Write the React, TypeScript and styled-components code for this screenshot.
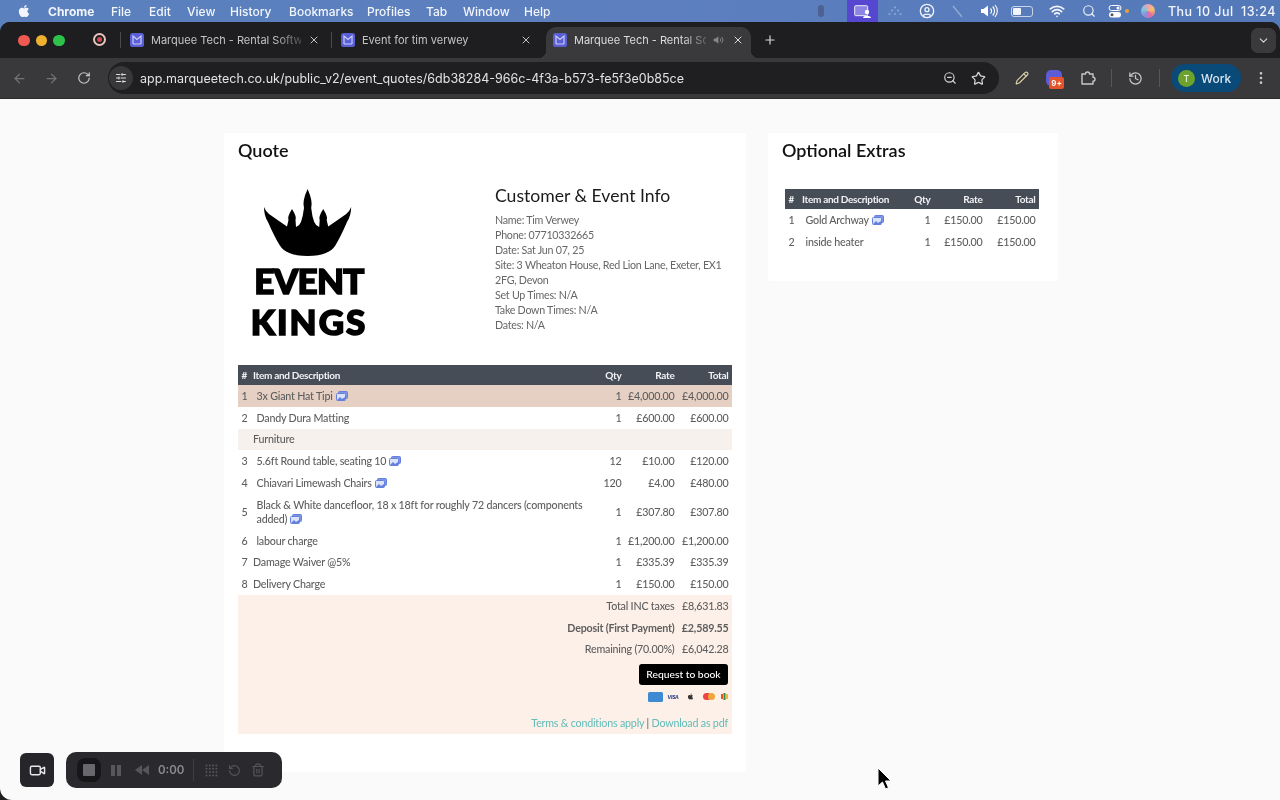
import React from "react";
import styled, { createGlobalStyle } from "styled-components";
import {
  ArrowLeft, ArrowRight, RotateCw, SlidersHorizontal, ZoomOut, Star, Pencil, History,
  EllipsisVertical, Plus, X, ChevronDown, Video, Search, Wifi, UserCircle, RotateCcw, Trash2,
} from "lucide-react";
import { FaApple } from "react-icons/fa";

const Global = createGlobalStyle`
  html, body { margin: 0; padding: 0; width: 1280px; height: 800px; overflow: hidden; background: #fafafa; }
  * { box-sizing: border-box; }
`;
const UI = `"Inter", "Liberation Sans", sans-serif`;
const PAGE = `"Lato", "Open Sans", sans-serif`;

const Screen = styled.div`position: relative; width: 1280px; height: 800px; overflow: hidden; display: flex; flex-direction: column; filter: blur(0.3px);
  background: linear-gradient(90deg, #5a80bd 0%, #5d7fbf 50%, #5479b8 100%);`;
const MenuBar = styled.div`height: 22px; flex: none; display: flex; align-items: center; font: 500 12px ${UI}; color: #f2f5fb;`;
const AppleSlot = styled.span`display: flex; margin-left: 17px; width: 31px;`;
const MenuItem = styled.span<{ $w: number; $b?: boolean }>`width: ${(p) => p.$w}px; flex: none; font-weight: ${(p) => (p.$b ? 700 : 500)};`;
const StatusArea = styled.div`margin-left: auto; display: flex; align-items: center; height: 22px;`;
const Slot = styled.span<{ $w: number; $active?: boolean; $dim?: boolean }>`position: relative; width: ${(p) => p.$w}px; height: 22px; display: flex; align-items: center; justify-content: center; color: #f0f3fa;
  background: ${(p) => (p.$active ? "#5547cf" : "transparent")}; opacity: ${(p) => (p.$dim ? 0.35 : 1)};`;
const Smudge = styled.span`width: 6px; height: 12px; border-radius: 3px; background: #4d6290; margin-right: 23px;`;
const OrangeDot = styled.span`position: absolute; right: -1px; top: 9px; width: 4px; height: 4px; border-radius: 50%; background: #e8a13a;`;
const Battery = styled.span`width: 22px; height: 11px; border-radius: 3px; border: 1px solid #c9d4e8; padding: 1px; display: flex;`;
const BatteryFill = styled.span`width: 8px; background: #f2f5fb; border-radius: 1px;`;
const Siri = styled.span`width: 14px; height: 14px; border-radius: 50%; background: conic-gradient(#f2a0b4, #f0c06a, #e86d9d, #8f8be0, #79c8dd, #f2a0b4);`;
const Clock = styled.span`width: 112px; font: 500 12.5px ${UI}; letter-spacing: 0.45px; white-space: pre; color: #f2f5fb;`;

const Browser = styled.div`flex: 1; display: flex; flex-direction: column; border-radius: 10px 10px 0 0; overflow: hidden; background: #1e1e20;`;
const TabStrip = styled.div`height: 36px; flex: none; display: flex; align-items: flex-end; background: #1e1e20; color: #c9c9cc;`;
const Lights = styled.div`display: flex; gap: 6px; margin: 0 0 12px 18px; width: 70px;`;
const Light = styled.span<{ $c: string }>`width: 11.5px; height: 11.5px; border-radius: 50%; background: ${(p) => p.$c};`;
const RecordDot = styled.span`width: 13px; height: 13px; margin: 0 14px 12px 5px; border-radius: 50%; border: 2px solid #e8c4c0; display: flex; align-items: center; justify-content: center;
  &::after { content: ""; width: 5px; height: 5px; border-radius: 50%; background: #d24a4a; }`;
const Sep = styled.span<{ $m: string }>`width: 1px; height: 16px; background: #4a4a4c; margin: ${(p) => p.$m}; align-self: center; flex: none;`;
const Tab = styled.div<{ $w: number; $ml?: number; $active?: boolean }>`position: relative; width: ${(p) => p.$w}px; margin-left: ${(p) => p.$ml ?? 0}px; height: 31px; flex: none; display: flex; align-items: center; gap: 7px; padding: 0 7px 5px 7px;
  font: 400 11px ${UI}; border-radius: 10px 10px 0 0; background: ${(p) => (p.$active ? "#3a3a3c" : "transparent")}; color: ${(p) => (p.$active ? "#dcdcde" : "#c4c4c7")};
  ${(p) => p.$active && `
    &::before, &::after { content: ""; position: absolute; bottom: 0; width: 8px; height: 8px; }
    &::before { left: -8px; background: radial-gradient(circle at 0 0, transparent 8px, #3a3a3c 8.5px); }
    &::after { right: -8px; background: radial-gradient(circle at 100% 0, transparent 8px, #3a3a3c 8.5px); }
  `}`;
const TabTitle = styled.span<{ $fade?: boolean }>`flex: 1; min-width: 0; white-space: nowrap;
  ${(p) => p.$fade && "mask-image: linear-gradient(90deg, #000 82%, rgba(0,0,0,0.25) 100%);"}`;
const NewTab = styled.span`display: flex; margin: 0 0 11px 12px; color: #d8d8da;`;
const TabList = styled.span`margin: 0 4px 5px auto; width: 25px; height: 25px; border-radius: 7px; background: #3a3a3c; display: flex; align-items: center; justify-content: center; color: #d8d8da;`;

const Toolbar = styled.div`height: 41px; flex: none; display: flex; align-items: center; background: #39393b; color: #c8c8ca; border-bottom: 1px solid #2c2c2e;`;
const NavIcon = styled.span<{ $w: number; $dim?: boolean }>`width: ${(p) => p.$w}px; flex: none; display: flex; justify-content: center; opacity: ${(p) => (p.$dim ? 0.4 : 1)};`;
const Omnibox = styled.div`width: 891px; height: 32px; margin: 0 4px; flex: none; display: flex; align-items: center; border-radius: 16px; background: #1f1f21;`;
const Tune = styled.span`width: 24px; height: 24px; margin-left: 1px; border-radius: 50%; background: #38383a; display: flex; align-items: center; justify-content: center; color: #dedee0;`;
const Url = styled.span`margin-left: 7px; flex: 1; font: 400 12.5px ${UI}; color: #e2e2e4; white-space: nowrap;`;
const OmniIcon = styled.span<{ $mr: number }>`display: flex; margin-right: ${(p) => p.$mr}px; color: #d4d4d6;`;
const ExtSlot = styled.span`position: relative; width: 16px; height: 16px; margin-right: 4px; border-radius: 5px; background: #5d5bd6; display: flex;`;
const Badge = styled.span`position: absolute; left: 3px; top: 7px; padding: 0 2px; height: 12px; min-width: 15px; border-radius: 2px; background: #e4552c; color: #fff; font: 700 8px/12px ${UI}; text-align: center;`;
const ToolSep = styled.span<{ $ml: number }>`width: 1px; height: 18px; background: #565658; margin-left: ${(p) => p.$ml}px; flex: none;`;
const Profile = styled.span`width: 70px; height: 28px; margin-left: 11px; flex: none; border-radius: 14px; background: #0a4a78; display: flex; align-items: center; gap: 6px; padding-left: 7px; font: 500 12px ${UI}; color: #d7e6f2;`;
const Avatar = styled.span`width: 17px; height: 17px; border-radius: 50%; background: #6da32d; color: #e7f3d6; font: 500 9px/17px ${UI}; text-align: center;`;

const Page = styled.main`flex: 1; min-height: 0; display: flex; align-items: flex-start; gap: 22px; padding: 34px 0 0 224px; background: #fafafa; border-bottom-left-radius: 12px; font-family: ${PAGE}; color: #636363;`;
const Card = styled.section<{ $w: number; $h: number }>`width: ${(p) => p.$w}px; height: ${(p) => p.$h}px; flex: none; background: #fff; padding: 5px 14px 0; border-radius: 3px;`;
const Title = styled.h2`margin: 0; font: 600 18px/24px ${PAGE}; color: #111;`;
const TopRow = styled.div`display: flex; margin-top: 20px; height: 160px;`;
const LogoBox = styled.div`width: 257px; display: flex; flex-direction: column; padding-left: 12px; color: #000;`;
const CrownSvg = styled.svg`width: 100px; height: 75px; margin: 2px 0 0 9px; flex: none; display: block;`;
const LogoWord = styled.div<{ $mt: number; $ls: number }>`width: 118px; text-align: center; white-space: nowrap; font: 900 35px/27px ${PAGE}; letter-spacing: ${(p) => p.$ls}px; -webkit-text-stroke: 1.6px #000; margin-top: ${(p) => p.$mt}px;`;
const Info = styled.div`flex: 1; padding-top: 2px;`;
const InfoTitle = styled.h3`margin: 0 0 4px; font: 400 17.6px/24px ${PAGE}; color: #1b1b1b;`;
const InfoLine = styled.div`font: 400 10.7px/15px ${PAGE}; letter-spacing: -0.26px; color: #666;`;

const Table = styled.table<{ $w: number; $mt: number; $ml?: number }>`width: ${(p) => p.$w}px; margin: ${(p) => p.$mt}px 0 0 ${(p) => p.$ml ?? 0}px; table-layout: fixed; border-collapse: collapse; font: 500 10.7px/14px ${PAGE}; letter-spacing: -0.2px; color: #5e5e5e;`;
const Th = styled.th<{ $right?: boolean; $flush?: boolean }>`height: 20px; padding: 0 3.5px 0 ${(p) => (p.$flush ? 0 : 3.5)}px; background: #474d57; color: #f1f2f4; font: 700 10px/14px ${PAGE}; letter-spacing: -0.3px; text-align: ${(p) => (p.$right ? "right" : "left")};`;
const Row = styled.tr<{ $bg?: string }>`background: ${(p) => p.$bg ?? "transparent"};`;
const Td = styled.td<{ $right?: boolean; $pad?: number; $b?: boolean }>`padding: 3.9px 3.5px 3.9px ${(p) => p.$pad ?? 3.5}px; text-align: ${(p) => (p.$right ? "right" : "left")}; font-weight: ${(p) => (p.$b ? 700 : 500)}; white-space: normal;`;
const Nowrap = styled(Td)`white-space: nowrap; padding-left: 0;`;
const ActionCell = styled.td`height: 28px; padding: 0 4px 0 0; text-align: right;`;
const RequestBtn = styled.button`width: 89px; height: 21px; border: 0; border-radius: 3px; background: #000; color: #fff; font: 500 10.3px ${PAGE}; padding: 0;`;
const PayCell = styled.td`height: 17px; padding: 0 4px 0 0;`;
const PayRow = styled.div`display: flex; justify-content: flex-end; align-items: center; gap: 3px;`;
const Amex = styled.span`width: 15px; height: 10px; background: #3f8bd3; border-radius: 1.5px;`;
const Visa = styled.span`width: 14px; font: italic 800 5.5px ${PAGE}; color: #2a3f86; text-align: center;`;
const Mc = styled.span`display: flex; width: 12px; height: 8px; margin: 0 3px 0 2px;`;
const McDot = styled.span<{ $c: string; $ml?: number }>`width: 7.5px; height: 7.5px; border-radius: 50%; background: ${(p) => p.$c}; margin-left: ${(p) => p.$ml ?? 0}px; flex: none;`;
const TermsCell = styled.td`height: 29px; padding: 6px 4px 0 0; text-align: right; font-weight: 400;`;
const TermLink = styled.span`color: #5fbcb8;`;
const Pipe = styled.span`color: #555;`;

const RecorderCam = styled.div`position: absolute; left: 20px; top: 753px; width: 34px; height: 34px; border-radius: 6px; background: #26262a; display: flex; align-items: center; justify-content: center; color: #e8e8ea;`;
const Recorder = styled.div`position: absolute; left: 66px; top: 752px; width: 216px; height: 36px; border-radius: 10px; background: #2a2a2e; display: flex; align-items: center; color: #77777b; font: 600 11.5px ${UI};`;
const StopRing = styled.span`width: 24px; height: 24px; margin-left: 11px; border-radius: 8px; background: #17171a; display: flex; align-items: center; justify-content: center;
  &::after { content: ""; width: 12px; height: 12px; background: #68686c; border-radius: 1px; }`;
const Pause = styled.span`display: flex; gap: 2px; margin-left: 10px; &::before, &::after { content: ""; width: 4px; height: 11px; background: #58585c; }`;
const Rewind = styled.span`margin: 0 0 0 14px; display: flex;`;
const Time = styled.span`margin-left: 9px; width: 24px; color: #8c8c90;`;
const RecSep = styled.span`width: 1px; height: 22px; background: #3e3e42; margin: 0 11px;`;
const RecIcon = styled.span`display: flex; margin-right: 10px; color: #55555a;`;
const Cursor = styled.svg`position: absolute; left: 876px; top: 767px; width: 16px; height: 25px;`;

const Favicon = () => (
  <svg width="14" height="14" viewBox="0 0 14 14" style={{ flex: "none" }}>
    <rect width="14" height="14" rx="2.5" fill="#5a5fd6" />
    <path d="M3 11V3l4 3.5L11 3v8M3 11h8" fill="none" stroke="#c9cdf7" strokeWidth="1.2" />
  </svg>
);
const Pic = () => (
  <svg width="12" height="10" viewBox="0 0 12 10" style={{ verticalAlign: "-1px", marginLeft: 3 }}>
    <rect x="2.5" y="0.5" width="9" height="7" rx="1" fill="#7c94e6" stroke="#6480dc" />
    <rect x="0.5" y="2.5" width="9" height="7" rx="1" fill="#dbe3fb" stroke="#6480dc" />
    <path d="M1 9l3-3 2 2 3-2v3.4H1z" fill="#6480dc" />
  </svg>
);
const Head = () => (
  <thead>
    <tr>
      <Th>#</Th>
      <Th $flush>Item and Description</Th>
      <Th $right>Qty</Th>
      <Th $right>Rate</Th>
      <Th $right>Total</Th>
    </tr>
  </thead>
);

type Item = { n?: number; name: string; qty?: string; rate?: string; total?: string; pic?: boolean; pad?: boolean; bg?: string };
const items: Item[] = [
  { n: 1, name: "3x Giant Hat Tipi", qty: "1", rate: "£4,000.00", total: "£4,000.00", pic: true, pad: true, bg: "#e6d0c3" },
  { n: 2, name: "Dandy Dura Matting", qty: "1", rate: "£600.00", total: "£600.00", pad: true },
  { name: "Furniture", bg: "#f6f1ec" },
  { n: 3, name: "5.6ft Round table, seating 10", qty: "12", rate: "£10.00", total: "£120.00", pic: true, pad: true },
  { n: 4, name: "Chiavari Limewash Chairs", qty: "120", rate: "£4.00", total: "£480.00", pic: true, pad: true },
  { n: 5, name: "Black & White dancefloor, 18 x 18ft for roughly 72 dancers (components added)", qty: "1", rate: "£307.80", total: "£307.80", pic: true, pad: true },
  { n: 6, name: "labour charge", qty: "1", rate: "£1,200.00", total: "£1,200.00", pad: true },
  { n: 7, name: "Damage Waiver @5%", qty: "1", rate: "£335.39", total: "£335.39" },
  { n: 8, name: "Delivery Charge", qty: "1", rate: "£150.00", total: "£150.00" },
];
const Cells = ({ it }: { it: Item }) => (
  <Row $bg={it.bg}>
    <Td>{it.n}</Td>
    <Td $pad={it.pad ? 3.5 : 0}>
      {it.name}
      {it.pic && <Pic />}
    </Td>
    <Nowrap $right>{it.qty}</Nowrap>
    <Nowrap $right>{it.rate}</Nowrap>
    <Nowrap $right>{it.total}</Nowrap>
  </Row>
);

export default function App() {
  const menus: [string, number][] = [["File", 38], ["Edit", 38], ["View", 43], ["History", 59], ["Bookmarks", 78], ["Profiles", 59], ["Tab", 37], ["Window", 61], ["Help", 40]];
  const tint = "#fdf0e9";
  return (
    <Screen>
      <Global />
      <MenuBar>
        <AppleSlot><FaApple size={14} /></AppleSlot>
        <MenuItem $w={63} $b>Chrome</MenuItem>
        {menus.map(([m, w]) => <MenuItem key={m} $w={w}>{m}</MenuItem>)}
        <StatusArea>
          <Smudge />
          <Slot $w={31} $active>
            <svg width="17" height="13" viewBox="0 0 17 13"><rect x="0.7" y="0.7" width="13" height="10" rx="1" fill="#8c85e6" stroke="#eee" /><circle cx="13" cy="7" r="2.2" fill="#fff" /><path d="M9 13c0-3 8-3 8 0z" fill="#fff" /></svg>
          </Slot>
          <Slot $w={34} $dim>
            <svg width="14" height="10" viewBox="0 0 14 10" fill="#fff"><circle cx="7" cy="1.5" r="1" /><circle cx="4" cy="4.5" r="1" /><circle cx="10" cy="4.5" r="1" /><circle cx="1.5" cy="8" r="1" /><circle cx="7" cy="8" r="1" /><circle cx="12.5" cy="8" r="1" /></svg>
          </Slot>
          <Slot $w={30}><UserCircle size={16} /></Slot>
          <Slot $w={30} $dim>
            <svg width="13" height="13" viewBox="0 0 13 13"><path d="M2 1l9 11" stroke="#fff" strokeWidth="1.4" /></svg>
          </Slot>
          <Slot $w={34}>
            <svg width="18" height="14" viewBox="0 0 18 14" fill="none" stroke="#fff"><path d="M1 5v4h2.5L8 12.5v-11L3.5 5z" fill="#fff" stroke="none" /><path d="M10.5 4.5a3.5 3.5 0 0 1 0 5M12.7 2.5a6.5 6.5 0 0 1 0 9M15 1a9 9 0 0 1 0 12" strokeWidth="1.1" /></svg>
          </Slot>
          <Slot $w={32}><Battery><BatteryFill /></Battery></Slot>
          <Slot $w={38}><Wifi size={16} strokeWidth={2.6} /></Slot>
          <Slot $w={26}><Search size={14} /></Slot>
          <Slot $w={26}>
            <svg width="14" height="13" viewBox="0 0 14 13"><rect x="1" y="0.5" width="12" height="5" rx="2.5" fill="none" stroke="#fff" /><circle cx="10" cy="3" r="1.5" fill="#fff" /><rect x="1" y="7" width="12" height="5.4" rx="2.7" fill="#fff" /><circle cx="4" cy="9.7" r="1.5" fill="#555" /></svg>
            <OrangeDot />
          </Slot>
          <Slot $w={40}><Siri /></Slot>
          <Clock>Thu 10 Jul  13:24</Clock>
        </StatusArea>
      </MenuBar>
      <Browser>
        <TabStrip>
          <Lights>
            <Light $c="#ee5a52" /><Light $c="#eeb12f" /><Light $c="#2fc24a" />
          </Lights>
          <RecordDot />
          <Sep $m="0 2px 0 0" />
          <Tab $w={204}>
            <Favicon />
            <TabTitle $fade>Marquee Tech - Rental Softw</TabTitle>
            <X size={12} />
          </Tab>
          <Sep $m="0 2px 0 4px" />
          <Tab $w={205}>
            <Favicon />
            <TabTitle>Event for tim verwey</TabTitle>
            <X size={12} />
          </Tab>
          <Tab $w={205} $ml={7} $active>
            <Favicon />
            <TabTitle $fade>Marquee Tech - Rental So</TabTitle>
            <svg width="12" height="12" viewBox="0 0 18 14" fill="none" stroke="#8a8a8c" style={{ flex: "none" }}><path d="M1 5v4h2.5L8 12.5v-11L3.5 5z" fill="#8a8a8c" stroke="none" /><path d="M10.5 4.5a3.5 3.5 0 0 1 0 5M13 2.5a6.5 6.5 0 0 1 0 9" strokeWidth="1.4" /></svg>
            <X size={12} />
          </Tab>
          <NewTab><Plus size={14} /></NewTab>
          <TabList><ChevronDown size={13} /></TabList>
        </TabStrip>
        <Toolbar>
          <NavIcon $w={38} $dim><ArrowLeft size={15} /></NavIcon>
          <NavIcon $w={26} $dim><ArrowRight size={15} /></NavIcon>
          <NavIcon $w={40}><RotateCw size={14} /></NavIcon>
          <Omnibox>
            <Tune><SlidersHorizontal size={12} /></Tune>
            <Url>app.marqueetech.co.uk/public_v2/event_quotes/6db38284-966c-4f3a-b573-fe5f3e0b85ce</Url>
            <OmniIcon $mr={14}><ZoomOut size={14} /></OmniIcon>
            <OmniIcon $mr={13}><Star size={15} /></OmniIcon>
          </Omnibox>
          <NavIcon $w={38}><Pencil size={14} color="#d8cfa6" /></NavIcon>
          <NavIcon $w={30}><ExtSlot><Badge>9+</Badge></ExtSlot></NavIcon>
          <NavIcon $w={34}>
            <svg width="16" height="16" viewBox="0 0 16 16" fill="none" stroke="#c8c8ca" strokeWidth="1.4"><path d="M2 4h3.5a2 2 0 0 1 4 0H13v3.2a2 2 0 0 1 0 4V14H2z" strokeLinejoin="round" /></svg>
          </NavIcon>
          <ToolSep $ml={6} />
          <NavIcon $w={47}><History size={15} /></NavIcon>
          <ToolSep $ml={0} />
          <Profile><Avatar>T</Avatar>Work</Profile>
          <NavIcon $w={40}><EllipsisVertical size={16} /></NavIcon>
        </Toolbar>
        <Page>
          <Card $w={522} $h={639}>
            <Title>Quote</Title>
            <TopRow>
              <LogoBox>
                <CrownSvg viewBox="0 0 100 75">
                  <path d="M5 23Q7 28 10 30L20 37L28 42.5L29.5 36Q28 33 33 25Q38 33 36.5 36L37 43Q41 41 42 38Q44 32 45 24Q43 17 48.6 5Q54 17 52.2 24Q53 32 55.2 38Q56.2 41 60.2 43L60.7 36Q59.2 33 64.2 25Q69.2 33 67.7 36L69.2 42.5L77.2 37L87.2 30Q90.2 28 92.2 23Q92 32 88 38Q82 52 76.3 61.6Q70 72 48.6 72Q27 72 20.9 61.6Q15 52 9 38Q5 32 5 23Z" fill="#000" />
                </CrownSvg>
                <LogoWord $mt={8} $ls={-0.7}>EVENT</LogoWord>
                <LogoWord $mt={14} $ls={2}>KINGS</LogoWord>
              </LogoBox>
              <Info>
                <InfoTitle>Customer &amp; Event Info</InfoTitle>
                <InfoLine>Name: Tim Verwey</InfoLine>
                <InfoLine>Phone: 07710332665</InfoLine>
                <InfoLine>Date: Sat Jun 07, 25</InfoLine>
                <InfoLine>Site: 3 Wheaton House, Red Lion Lane, Exeter, EX1 2FG, Devon</InfoLine>
                <InfoLine>Set Up Times: N/A</InfoLine>
                <InfoLine>Take Down Times: N/A</InfoLine>
                <InfoLine>Dates: N/A</InfoLine>
              </Info>
            </TopRow>
            <Table $w={494} $mt={23}>
              <colgroup>
                <col width="15" /><col width="338" /><col width="34" /><col width="53" /><col width="54" />
              </colgroup>
              <Head />
              <tbody>
                {items.map((it) => <Cells key={it.name} it={it} />)}
                <Row $bg={tint}><Nowrap colSpan={4} $right>Total INC taxes</Nowrap><Nowrap $right>£8,631.83</Nowrap></Row>
                <Row $bg={tint}><Nowrap colSpan={4} $right $b>Deposit (First Payment)</Nowrap><Nowrap $right $b>£2,589.55</Nowrap></Row>
                <Row $bg={tint}><Nowrap colSpan={4} $right>Remaining (70.00%)</Nowrap><Nowrap $right>£6,042.28</Nowrap></Row>
                <Row $bg={tint}><ActionCell colSpan={5}><RequestBtn>Request to book</RequestBtn></ActionCell></Row>
                <Row $bg={tint}>
                  <PayCell colSpan={5}>
                    <PayRow>
                      <Amex /><Visa>VISA</Visa>
                      <FaApple size={7} color="#333" style={{ margin: "0 4px" }} />
                      <Mc><McDot $c="#e44" /><McDot $c="#f0a63a" $ml={-3} /></Mc>
                      <svg width="7" height="8" viewBox="0 0 7 8"><rect x="0" y="1" width="2" height="5" fill="#e4552c" /><rect x="2.5" y="0" width="2" height="7" fill="#2c8c4c" /><rect x="5" y="1" width="2" height="5" fill="#f0b93a" /></svg>
                    </PayRow>
                  </PayCell>
                </Row>
                <Row $bg={tint}>
                  <TermsCell colSpan={5}><TermLink>Terms &amp; conditions apply</TermLink> <Pipe>|</Pipe> <TermLink>Download as pdf</TermLink></TermsCell>
                </Row>
              </tbody>
            </Table>
          </Card>
          <Card $w={290} $h={148}>
            <Title>Optional Extras</Title>
            <Table $w={254} $mt={27} $ml={3}>
              <colgroup>
                <col width="17" /><col width="102" /><col width="30" /><col width="52" /><col width="53" />
              </colgroup>
              <Head />
              <tbody>
                <Row><Td>1</Td><Td>Gold Archway<Pic /></Td><Nowrap $right>1</Nowrap><Nowrap $right>£150.00</Nowrap><Nowrap $right>£150.00</Nowrap></Row>
                <Row><Td>2</Td><Td>inside heater</Td><Nowrap $right>1</Nowrap><Nowrap $right>£150.00</Nowrap><Nowrap $right>£150.00</Nowrap></Row>
              </tbody>
            </Table>
          </Card>
        </Page>
      </Browser>
      <RecorderCam><Video size={17} /></RecorderCam>
      <Recorder>
        <StopRing />
        <Pause />
        <Rewind>
          <svg width="14" height="10" viewBox="0 0 14 10"><path d="M7 0v10L0 5zM14 0v10L7 5z" fill="#55555a" /></svg>
        </Rewind>
        <Time>0:00</Time>
        <RecSep />
        <RecIcon>
          <svg width="13" height="13" viewBox="0 0 13 13" fill="#55555a">
            {[1.5, 4.8, 8.1, 11.4].flatMap((y) => [1.5, 4.8, 8.1, 11.4].map((x) => <circle key={`${x}-${y}`} cx={x} cy={y} r="1" />))}
          </svg>
        </RecIcon>
        <RecIcon><RotateCcw size={13} /></RecIcon>
        <RecIcon><Trash2 size={14} /></RecIcon>
      </Recorder>
      <Cursor viewBox="0 0 16 25">
        <path d="M2 1v18l4.5-4 3 7 3-1.3-3-6.7H15z" fill="#000" stroke="#fff" strokeWidth="1" />
      </Cursor>
    </Screen>
  );
}
